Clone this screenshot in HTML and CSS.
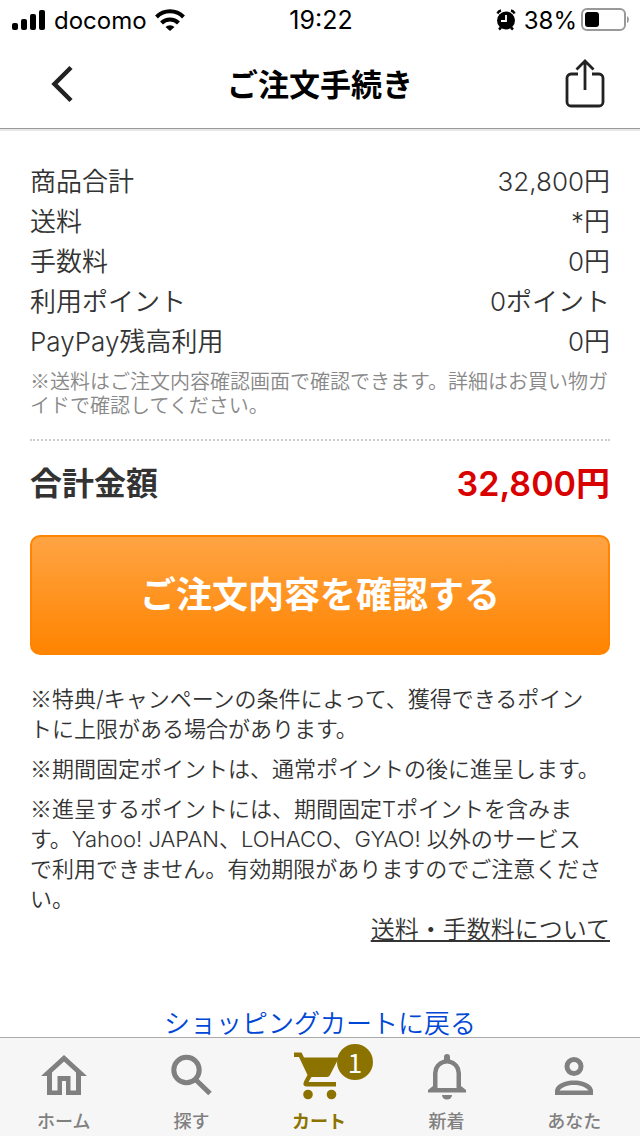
FILE: index.html
```html
<!DOCTYPE html>
<html lang="ja">
<head>
<meta charset="utf-8">
<meta name="viewport" content="width=device-width, initial-scale=1">
<title>ご注文手続き</title>
<link rel="stylesheet" href="styles.css">
</head>
<body>
<div class="page">
  <div class="status">
    <div class="status-side">
      <svg width="34" height="22" viewBox="0 0 34 22" aria-hidden="true"><rect x="0" y="14" width="6" height="7" rx="2"/><rect x="9" y="10" width="6" height="11" rx="2"/><rect x="18" y="5" width="6" height="16" rx="2"/><rect x="27" y="1" width="6" height="20" rx="2"/></svg>
      <span>docomo</span>
      <svg class="wifi" width="30" height="22" viewBox="0 0 30 22" aria-hidden="true"><g fill="none" stroke="#000" stroke-width="4"><path d="M1.500 8a19 19 0 0 1 27 0"/><path d="M6.500 14a12 12 0 0 1 17 0"/></g><path d="M10.500 18a6.500 6.500 0 0 1 9 0L15 22z"/></svg>
    </div>
    <span class="clock">19:22</span>
    <div class="status-side status-right">
      <svg width="20" height="22" viewBox="0 0 20 22" aria-hidden="true"><circle cx="10" cy="11.500" r="9"/><path d="M1.500 4.500A5 5 0 0 1 5 1.500M18.500 4.500A5 5 0 0 0 15 1.500M3 20.500l2-2M17 20.500l-2-2" fill="none" stroke="#000" stroke-width="2.500"/><path d="M10 6v6H5" fill="none" stroke="#fff" stroke-width="1.800"/></svg>
      <span>38%</span>
      <svg class="battery" width="49" height="24" viewBox="0 0 49 24" aria-hidden="true"><rect x="1" y="1" width="43" height="21" rx="5" fill="none" stroke="#999" stroke-width="2"/><rect x="4" y="4" width="14" height="15" rx="3"/><path d="M46 8q2 1 2 3.500T46 15z" fill="#999"/></svg>
    </div>
  </div>
  <header class="nav">
    <button class="nav-btn" type="button" aria-label="戻る"><svg width="60" height="50" viewBox="0 0 60 50"><path d="M38 8.500 21.500 25 38 41.500" fill="none" stroke="#222" stroke-width="4.500"/></svg></button>
    <h1 class="title">ご注文手続き</h1>
    <button class="nav-btn share" type="button" aria-label="共有"><svg width="44" height="50" viewBox="0 0 44 50"><g fill="none" stroke="#222" stroke-width="2.800"><path d="M15 15H8a4 4 0 0 0-4 4V43a4 4 0 0 0 4 4h28a4 4 0 0 0 4-4V19a4 4 0 0 0-4-4h-7"/><path d="M22 31V2M13.500 10.500 22 2l8.500 8.500"/></g></svg></button>
  </header>
  <main class="content">
    <dl class="rows">
      <div class="row"><dt>商品合計</dt><dd>32,800円</dd></div>
      <div class="row"><dt>送料</dt><dd>*円</dd></div>
      <div class="row"><dt>手数料</dt><dd>0円</dd></div>
      <div class="row"><dt>利用ポイント</dt><dd>0ポイント</dd></div>
      <div class="row"><dt>PayPay残高利用</dt><dd>0円</dd></div>
    </dl>
    <p class="hint">※送料はご注文内容確認画面で確認できます。詳細はお買い物ガイドで確認してください。</p>
    <div class="total"><span class="total-label">合計金額</span><strong class="total-price">32,800円</strong></div>
    <button class="confirm" type="button">ご注文内容を確認する</button>
    <div class="notes">
      <p><span class="mark">※</span>特典/キャンペーンの条件によって、獲得できるポイントに上限がある場合があります。</p>
      <p><span class="mark">※</span>期間固定ポイントは、通常ポイントの後に進呈します。</p>
      <p><span class="mark">※</span>進呈するポイントには、期間固定Tポイントを含みます。Yahoo! JAPAN、LOHACO、GYAO! 以外のサービスで利用できません。有効期限がありますのでご注意ください。</p>
    </div>
    <a class="fee-link" href="#">送料・手数料について</a>
    <a class="back-link" href="#">ショッピングカートに戻る</a>
  </main>
  <nav class="tabs">
    <a class="tab" href="#"><svg width="52" height="52" viewBox="0 0 52 52"><path fill-rule="evenodd" d="M26 5 49 26H43V45H28V31H24V45H9V26H3ZM26 11.500 14 22.500V40.500H19.500V26H32.500V40.500H38V22.500Z"/></svg><span>ホーム</span></a>
    <a class="tab" href="#"><svg width="52" height="52" viewBox="0 0 52 52"><g fill="none" stroke="currentColor" stroke-width="5"><circle cx="21.500" cy="20" r="12.700"/><path d="M31 30 45 43.500"/></g></svg><span>探す</span></a>
    <a class="tab active" href="#"><span class="cart"><svg width="52" height="52" viewBox="0 0 52 52"><path fill-rule="evenodd" d="M1 2.500H8.500L11 7.500H46L37 25Q36 27 34 27H18.500L15.500 32H43V36.500H14Q9 36.500 11 31.500L14.500 25 6 7H1Z"/><circle cx="15" cy="44.500" r="4.800"/><circle cx="38.500" cy="44.500" r="4.800"/></svg><span class="badge">1</span></span><span>カート</span></a>
    <a class="tab" href="#"><svg width="52" height="52" viewBox="0 0 52 52"><path fill-rule="evenodd" d="M26 4a3 3 0 0 1 3 3v2.500A14 14 0 0 1 40 23V36L45 40V42.500H7V40L12 36V23A14 14 0 0 1 23 9.500V7a3 3 0 0 1 3-3ZM26 13.500A9.500 9.500 0 0 0 16.500 23V38H35.500V23A9.500 9.500 0 0 0 26 13.500Z"/><path d="M21 45H31A5 4.500 0 0 1 21 45Z"/></svg><span>新着</span></a>
    <a class="tab" href="#"><svg width="52" height="52" viewBox="0 0 52 52"><circle cx="26" cy="16.500" r="7" fill="none" stroke="currentColor" stroke-width="5"/><path fill-rule="evenodd" d="M7 45V40C9 33 18 30.500 26 30.500S43 33 45 40V45ZM11.500 40.500H40.500C37 36.500 32 35 26 35S15 36.500 11.500 40.500Z"/></svg><span>あなた</span></a>
  </nav>
</div>
</body>
</html>
```

FILE: styles.css
```css
* { box-sizing: border-box; }
body, h1, p, dl, dd { margin: 0; }
body {
  background: #fff;
  color: #333;
  font-family: Inter, "Noto Sans CJK JP", sans-serif;
}
button { border: 0; background: none; padding: 0; font-family: inherit; }
svg { display: block; fill: currentColor; }
.page { display: flex; flex-direction: column; min-height: 100vh; }

.status {
  display: flex;
  align-items: center;
  height: 40px;
  padding: 0 10px 0 12px;
  color: #000;
  font-size: 24px;
}
.status-side { display: flex; flex: 1; align-items: center; gap: 8px; }
.status-right { justify-content: flex-end; }
.clock { font-size: 25px; }
.battery { margin-left: -4px; }

.nav {
  display: flex;
  align-items: center;
  justify-content: space-between;
  height: 89px;
  padding: 0 33px;
  border-bottom: 1px solid #999;
  box-shadow: 0 2px #e8e8e8;
}
.nav-btn { display: flex; width: 60px; }
.share { justify-content: flex-end; }
.title { padding-top: 2px; color: #000; font-size: 31px; font-weight: 700; line-height: 40px; }

.content { display: flex; flex-direction: column; padding: 33px 30px 0; }
.row { display: flex; justify-content: space-between; font-size: 26px; font-weight: 350; line-height: 40px; }
.hint {
  margin-top: 7px;
  padding-bottom: 22px;
  border-bottom: 2px dotted #ccc;
  color: #888;
  font-family: "Noto Sans CJK JP", sans-serif;
  font-size: 20px;
  font-weight: 350;
  line-height: 24px;
}
.total { display: flex; align-items: center; justify-content: space-between; height: 94px; padding-bottom: 14px; }
.total-label { font-size: 32px; font-weight: 700; }
.total-price { color: #d90000; font-size: 34px; font-weight: 600; }
.confirm {
  height: 120px;
  padding-bottom: 6px;
  border: 2px solid #ff8400;
  border-radius: 10px;
  background: linear-gradient(#ffa443, #ff8400);
  color: #fff;
  font-size: 36px;
  font-weight: 700;
}
.notes {
  display: flex;
  flex-direction: column;
  gap: 10px;
  margin-top: 29px;
  padding-right: 8px;
  font-size: 22px;
  font-weight: 350;
  line-height: 30px;
}
.mark { font-family: "Noto Sans CJK JP", sans-serif; line-height: 22px; }
.fee-link { align-self: flex-end; color: #333; font-size: 24px; font-weight: 350; line-height: 32px; }
.back-link {
  align-self: center;
  margin-top: 65px;
  color: #0047d6;
  font-size: 26px;
  font-weight: 350;
  line-height: 26px;
  text-decoration: none;
}

.tabs {
  position: sticky;
  bottom: 0;
  display: flex;
  margin-top: auto;
  padding: 12px 2px 1px 0;
  border-top: 1px solid #aaa;
  background: #f6f6f6;
}
.tab {
  display: flex;
  flex: 1;
  flex-direction: column;
  align-items: center;
  gap: 7px;
  color: #808080;
  font-size: 18px;
  font-weight: 500;
  line-height: 26px;
  text-decoration: none;
}
.active { color: #8c7300; font-weight: 700; }
.cart { position: relative; }
.badge {
  position: absolute;
  top: -6px;
  right: -28px;
  width: 36px;
  height: 36px;
  border-radius: 50%;
  background: #8c7300;
  color: #fff;
  font-family: "Noto Sans CJK JP", sans-serif;
  font-size: 26px;
  font-weight: 400;
  line-height: 36px;
  text-align: center;
}
```
